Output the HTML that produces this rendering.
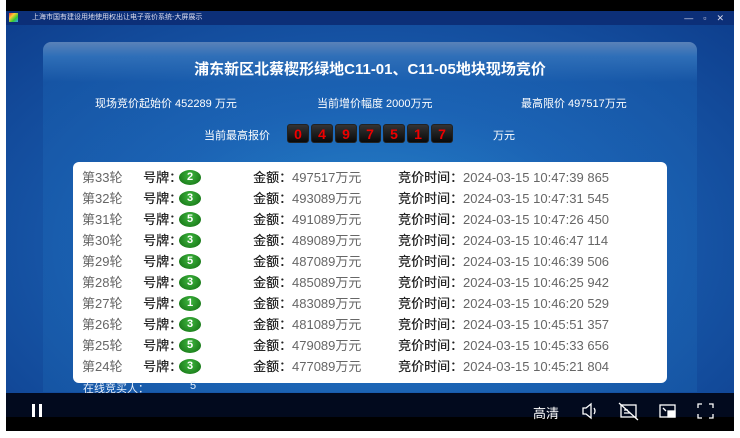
<!DOCTYPE html>
<html><head><meta charset="utf-8"><style>
*{margin:0;padding:0;box-sizing:border-box}
body{width:740px;height:438px;background:#fff;position:relative;overflow:hidden;font-family:"Liberation Sans","Noto Sans CJK SC",sans-serif}
.abs{position:absolute}
#top{left:6px;top:0;width:728px;height:11px;background:#000}
#tbar{left:6px;top:11px;width:728px;height:14px;background:#0c2f78;color:#dde;font-size:7px;line-height:14px}
#main{left:6px;top:25px;width:728px;height:368px;background:radial-gradient(ellipse at 50% 60%,#2a8fd0 0%,#1a5eb0 45%,#0e3f8e 100%)}
#panel{left:43px;top:42px;width:654px;height:350px;border-radius:8px 8px 0 0;background:linear-gradient(#5a82b8 0px,#2f6fb8 14px,rgba(30,110,190,0.3) 40px,rgba(40,140,210,0.15) 100%)}
.t{color:#fff;white-space:nowrap}
.dg{position:absolute;top:124px;width:22px;height:19px;border-radius:3px;background:linear-gradient(#333,#0a0a0a);border:1px solid #222;color:#e00;font-weight:bold;font-size:14px;text-align:center;line-height:18px}
#tbl{left:73px;top:162px;width:594px;height:221px;background:#fff;border-radius:6px}
.r{position:absolute;left:0;width:594px;height:21px;font-size:13px;color:#666;line-height:21px;white-space:nowrap}
.r span{position:absolute}
.r b{color:#222;font-weight:normal;text-shadow:0.3px 0 0 #222}
.b{display:inline-block;position:absolute;top:3px;width:22px;height:15px;border-radius:50%;background:radial-gradient(circle at 50% 35%,#3fb83f,#106a10);color:#fff;font-weight:bold;font-size:11px;text-align:center;line-height:15px}
#ctrl{left:6px;top:393px;width:728px;height:24px;background:#020a1e}
#blk{left:6px;top:417px;width:728px;height:14px;background:#000}
</style></head><body>
<div id="top" class="abs"></div>
<div id="tbar" class="abs"><div class="abs" style="left:3px;top:2px;width:9px;height:9px;background:linear-gradient(135deg,#e33,#fc3,#3c3,#39f)"></div><span style="position:absolute;left:26px">上海市国有建设用地使用权出让电子竞价系统-大屏展示</span><span style="position:absolute;right:10px;font-size:9px">—&nbsp;&nbsp;&nbsp;&nbsp;▫&nbsp;&nbsp;&nbsp;&nbsp;✕</span></div>
<div id="main" class="abs"></div>
<div id="panel" class="abs"></div>
<div class="abs t" style="left:0;width:740px;text-align:center;top:58px;font-size:15px;font-weight:bold">浦东新区北蔡楔形绿地C11-01、C11-05地块现场竞价</div>
<div class="abs t" style="left:95px;top:95px;font-size:11px">现场竞价起始价 452289 万元</div>
<div class="abs t" style="left:317px;top:95px;font-size:11px">当前增价幅度 2000万元</div>
<div class="abs t" style="left:521px;top:95px;font-size:11px">最高限价 497517万元</div>
<div class="abs t" style="left:204px;top:127px;font-size:11px">当前最高报价</div>
<div class="dg" style="left:287px">0</div><div class="dg" style="left:311px">4</div><div class="dg" style="left:335px">9</div><div class="dg" style="left:359px">7</div><div class="dg" style="left:383px">5</div><div class="dg" style="left:407px">1</div><div class="dg" style="left:431px">7</div>
<div class="abs t" style="left:493px;top:127px;font-size:11px">万元</div>
<div id="tbl" class="abs">
<div class="r" style="top:5px"><span style="left:9px">第33轮</span><span style="left:70px"><b>号牌：</b></span><span class="b" style="left:106px">2</span><span style="left:180px"><b>金额：</b>497517万元</span><span style="left:325px"><b>竞价时间：</b>2024-03-15 10:47:39 865</span></div>
<div class="r" style="top:26px"><span style="left:9px">第32轮</span><span style="left:70px"><b>号牌：</b></span><span class="b" style="left:106px">3</span><span style="left:180px"><b>金额：</b>493089万元</span><span style="left:325px"><b>竞价时间：</b>2024-03-15 10:47:31 545</span></div>
<div class="r" style="top:47px"><span style="left:9px">第31轮</span><span style="left:70px"><b>号牌：</b></span><span class="b" style="left:106px">5</span><span style="left:180px"><b>金额：</b>491089万元</span><span style="left:325px"><b>竞价时间：</b>2024-03-15 10:47:26 450</span></div>
<div class="r" style="top:68px"><span style="left:9px">第30轮</span><span style="left:70px"><b>号牌：</b></span><span class="b" style="left:106px">3</span><span style="left:180px"><b>金额：</b>489089万元</span><span style="left:325px"><b>竞价时间：</b>2024-03-15 10:46:47 114</span></div>
<div class="r" style="top:89px"><span style="left:9px">第29轮</span><span style="left:70px"><b>号牌：</b></span><span class="b" style="left:106px">5</span><span style="left:180px"><b>金额：</b>487089万元</span><span style="left:325px"><b>竞价时间：</b>2024-03-15 10:46:39 506</span></div>
<div class="r" style="top:110px"><span style="left:9px">第28轮</span><span style="left:70px"><b>号牌：</b></span><span class="b" style="left:106px">3</span><span style="left:180px"><b>金额：</b>485089万元</span><span style="left:325px"><b>竞价时间：</b>2024-03-15 10:46:25 942</span></div>
<div class="r" style="top:131px"><span style="left:9px">第27轮</span><span style="left:70px"><b>号牌：</b></span><span class="b" style="left:106px">1</span><span style="left:180px"><b>金额：</b>483089万元</span><span style="left:325px"><b>竞价时间：</b>2024-03-15 10:46:20 529</span></div>
<div class="r" style="top:152px"><span style="left:9px">第26轮</span><span style="left:70px"><b>号牌：</b></span><span class="b" style="left:106px">3</span><span style="left:180px"><b>金额：</b>481089万元</span><span style="left:325px"><b>竞价时间：</b>2024-03-15 10:45:51 357</span></div>
<div class="r" style="top:173px"><span style="left:9px">第25轮</span><span style="left:70px"><b>号牌：</b></span><span class="b" style="left:106px">5</span><span style="left:180px"><b>金额：</b>479089万元</span><span style="left:325px"><b>竞价时间：</b>2024-03-15 10:45:33 656</span></div>
<div class="r" style="top:194px"><span style="left:9px">第24轮</span><span style="left:70px"><b>号牌：</b></span><span class="b" style="left:106px">3</span><span style="left:180px"><b>金额：</b>477089万元</span><span style="left:325px"><b>竞价时间：</b>2024-03-15 10:45:21 804</span></div>
</div>
<div class="abs t" style="left:83px;top:380px;font-size:11px;color:#e6eefa">在线竞买人：</div>
<div class="abs t" style="left:190px;top:380px;font-size:11px;color:#e6eefa">5</div>
<div id="ctrl" class="abs"></div>
<div id="blk" class="abs"></div>
<div class="abs" style="left:32px;top:404px;width:3px;height:13px;background:#fff"></div>
<div class="abs" style="left:39px;top:404px;width:3px;height:13px;background:#fff"></div>
<div class="abs t" style="left:533px;top:403px;font-size:13px">高清</div>
<svg class="abs" style="left:575px;top:400px" width="150" height="22" fill="none" stroke="#fff" stroke-width="1.3">
<path d="M8 8h3l5-4v14l-5-4H8z"/><path d="M19 8q2 3 0 6"/>
<rect x="46" y="5" width="15" height="12"/><path d="M44 3l19 17M49 10h4M49 13h6"/>
<rect x="85" y="5" width="15" height="12"/><rect x="93" y="11" width="7" height="6" fill="#fff"/><path d="M88 8l3 3"/>
<path d="M123 8V4h4M134 4h4v4M138 14v4h-4M127 18h-4v-4"/>
</svg>
</body></html>
